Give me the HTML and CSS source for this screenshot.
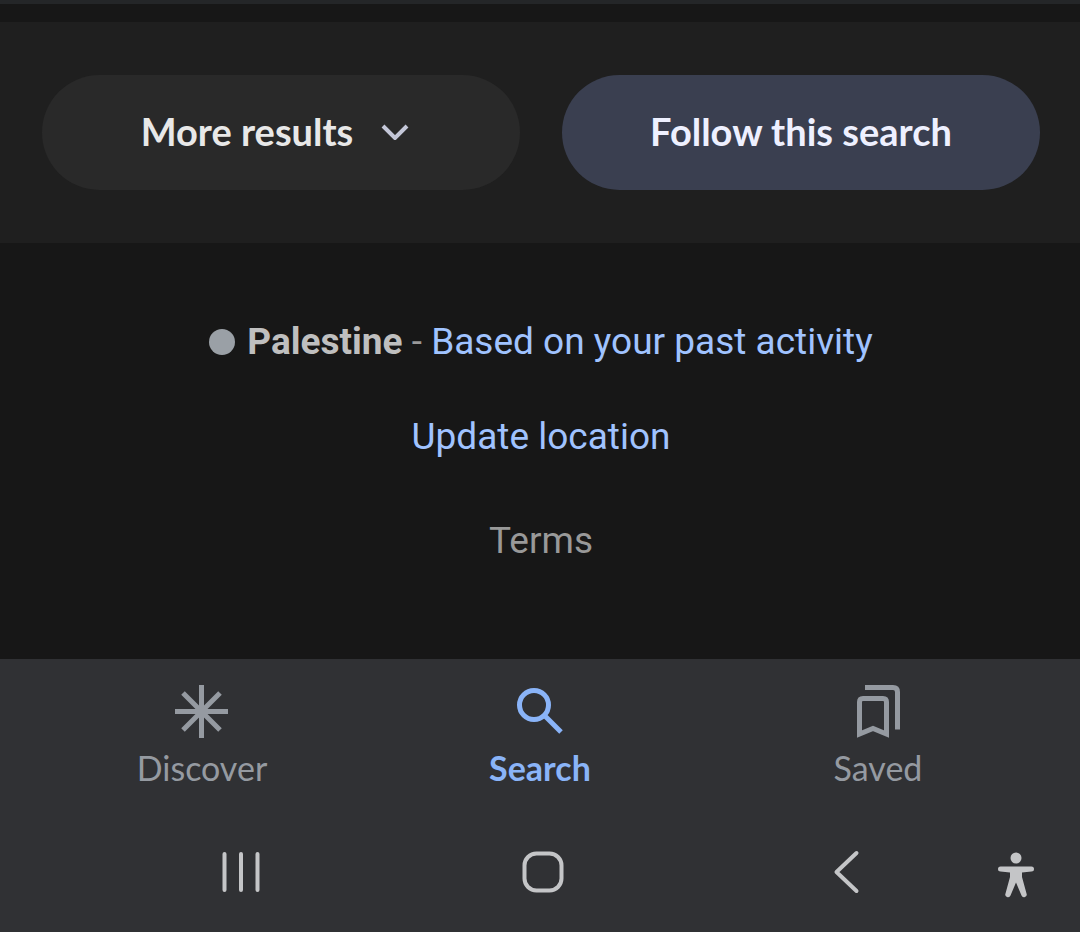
FILE: index.html
```html
<!doctype html>
<html lang="en">
	<head>
		<meta charset="UTF-8">
		<meta name="viewport" content="width=device-width, initial-scale=1">
		<title>Search</title>
		<link rel="stylesheet" href="styles.css">
	</head>

	<body>
		<main class="results">
			<div class="actions">
				<button type="button" class="pill more">
					More results
					<svg class="chevron" viewBox="0 0 40 18" aria-hidden="true"><path d="M2 4L14 16L26 4" /></svg>
				</button>
				<button type="button" class="pill follow">Follow this search</button>
			</div>
		</main>

		<footer class="footer">
			<p class="location">
				<span class="dot"></span>
				<span><b>Palestine</b> - <a href="#">Based on your past activity</a></span>
			</p>
			<p class="update"><a href="#">Update location</a></p>
			<p class="terms"><a href="#">Terms</a></p>
		</footer>

		<div class="bottom">
			<nav class="tabs">
				<a href="#" class="tab">
					<svg class="tab-icon" viewBox="0 0 56 56" aria-hidden="true">
						<path d="M27.500 1V54M1 27.500H54M9 9L46 46M46 9L9 46" />
					</svg>
					Discover
				</a>
				<a href="#" class="tab on">
					<svg class="tab-icon" viewBox="0 0 56 56" aria-hidden="true">
						<circle cx="22" cy="21" r="14.500" />
						<path d="M32 31L49 48" />
					</svg>
					Search
				</a>
				<a href="#" class="tab">
					<svg class="tab-icon" viewBox="0 0 56 56" aria-hidden="true">
						<path d="M9.500 50V18Q9.500 14.500 13 14.500H33Q36.500 14.500 36.500 18V50L23 44.500Z" />
						<path d="M17.500 6V3.500H43Q47.500 3.500 47.500 8V45.500" />
					</svg>
					Saved
				</a>
			</nav>

			<div class="system">
				<button type="button" aria-label="Recent apps">
					<svg width="44" height="44" viewBox="0 0 44 44"><path d="M5.500 4V40M22 4V40M38.500 4V40" /></svg>
				</button>
				<button type="button" aria-label="Home">
					<svg width="44" height="44" viewBox="0 0 44 44"><rect x="2.500" y="3.500" width="37" height="37" rx="12" /></svg>
				</button>
				<button type="button" aria-label="Back">
					<svg width="44" height="44" viewBox="0 0 44 44"><path d="M31.500 3L11.500 22L31.500 41" /></svg>
				</button>
				<button type="button" class="access" aria-label="Accessibility">
					<svg width="36" height="46" viewBox="0 0 36 46">
						<circle cx="18" cy="6" r="5.500" />
						<path d="M2.500 14.500H33.500A2.500 2.500 0 0 1 33.500 19.500L24 20.500V25L28.500 41.500A2.400 2.400 0 0 1 23.500 43.500L18 30.500L12.500 43.500A2.400 2.400 0 0 1 7.500 41.500L12 25V20.500L2.500 19.500A2.500 2.500 0 0 1 2.500 14.500Z" />
					</svg>
				</button>
			</div>
		</div>
	</body>
</html>
```
FILE: styles.css
```css
* {
	margin: 0;
	padding: 0;
	box-sizing: border-box;
}

body {
	display: flex;
	flex-direction: column;
	min-height: 100vh;
	border-top: 4px solid #242628;
	background-color: #171717;
	color: #999;
	font-family: Roboto, "Liberation Sans", sans-serif;
	font-size: 37px;
	line-height: 44px;
}

a {
	color: #a0c3ff;
	text-decoration: none;
}

button {
	border: 0;
	background: none;
	font: inherit;
	cursor: pointer;
}

svg {
	display: block;
	fill: none;
}

.results {
	margin-top: 18px;
	padding: 53px 40px 53px 42px;
	background-color: #1f1f1f;
}

.actions {
	display: grid;
	grid-template-columns: 1fr 1fr;
	gap: 42px;
}

.pill {
	display: flex;
	align-items: center;
	justify-content: center;
	gap: 28px;
	height: 115px;
	padding-bottom: 4px;
	border-radius: 58px;
	font-family: Lato, sans-serif;
	font-size: 38px;
	font-weight: 700;
}

.more {
	background-color: #292929;
	color: #e8e8e8;
}

.follow {
	background-color: #3a3f50;
	color: #eef0ff;
}

.chevron {
	width: 40px;
	height: 18px;
	stroke: #c4c7d8;
	stroke-width: 4;
}

.footer {
	flex: 1;
	padding: 77px 18px 70px 20px;
	text-align: center;
}

.location {
	display: flex;
	align-items: center;
	justify-content: center;
	gap: 12px;
}

.location b {
	color: #bfbfbf;
}

.dot {
	width: 26px;
	height: 26px;
	border-radius: 50%;
	background-color: #9aa0a6;
}

.update {
	margin-top: 51px;
}

.terms {
	margin-top: 60px;
}

.terms a {
	color: #999;
}

.bottom {
	padding-top: 25px;
	background-color: #303134;
}

.tabs {
	display: grid;
	grid-template-columns: 1fr 1fr 1fr;
	padding: 0 33px;
}

.tab {
	display: flex;
	flex-direction: column;
	align-items: center;
	gap: 6px;
	color: #959aa1;
	font-family: Lato, sans-serif;
	font-size: 34px;
}

.tab.on {
	color: #8ab4f8;
	font-weight: 700;
}

.tab-icon {
	width: 56px;
	height: 56px;
	stroke: currentColor;
	stroke-width: 5;
}

.system {
	display: grid;
	grid-template-columns: 1fr 1fr 1fr 36px;
	align-items: start;
	padding: 60px 46px 34px 90px;
}

.system button {
	display: flex;
	justify-content: center;
}

.system svg {
	stroke: #c4c5c7;
	stroke-width: 4;
	stroke-linecap: round;
	stroke-linejoin: round;
}

.system .access {
	padding-top: 2px;
}

.system .access svg {
	fill: #c4c5c7;
	stroke: none;
}
```
